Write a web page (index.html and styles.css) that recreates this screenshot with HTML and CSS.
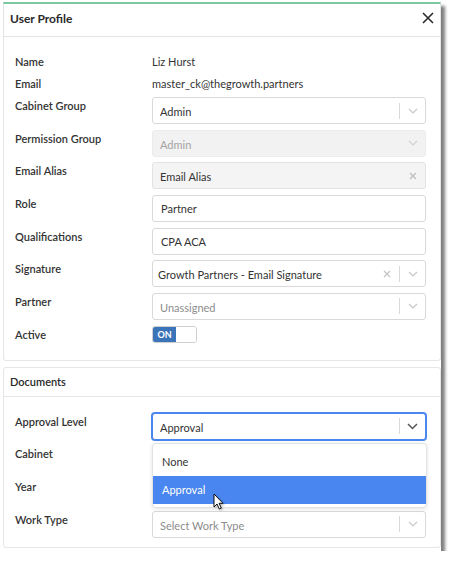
FILE: index.html
```html
<!DOCTYPE html>
<html lang="en">
<head>
<meta charset="utf-8">
<title>User Profile</title>
<link rel="stylesheet" href="styles.css">
</head>
<body>
<div class="dialog">
  <header class="dlg-head">
    <h1 class="dlg-title">User Profile</h1>
    <button class="close" type="button" aria-label="Close">
      <svg width="12" height="12" viewBox="0 0 12 12"><path d="M1 1 L11 11 M11 1 L1 11" stroke="#2b2b2b" stroke-width="1.6" fill="none"/></svg>
    </button>
  </header>

  <section class="card card-profile">
    <div class="form">
      <div class="row info"><span class="lbl">Name</span><span class="val">Liz Hurst</span></div>
      <div class="row info"><span class="lbl">Email</span><span class="val">master_ck@thegrowth.partners</span></div>

      <div class="row field first">
        <label class="lbl">Cabinet Group</label>
        <div class="select">
          <span class="sel-value">Admin</span>
          <span class="sep"></span>
          <span class="ind"><svg width="10" height="6" viewBox="0 0 10 6"><path d="M1 1 L5 5 L9 1" stroke="#c8c8c8" stroke-width="1.2" fill="none"/></svg></span>
        </div>
      </div>

      <div class="row field">
        <label class="lbl">Permission Group</label>
        <div class="select disabled">
          <span class="sel-value">Admin</span>
          <span class="ind"><svg width="10" height="6" viewBox="0 0 10 6"><path d="M1 1 L5 5 L9 1" stroke="#d2d2d2" stroke-width="1.2" fill="none"/></svg></span>
        </div>
      </div>

      <div class="row field">
        <label class="lbl">Email Alias</label>
        <div class="select muted">
          <span class="sel-value">Email Alias</span>
          <span class="ind"><svg width="8" height="8" viewBox="0 0 8 8"><path d="M1 1 L7 7 M7 1 L1 7" stroke="#bdbdbd" stroke-width="1.3" fill="none"/></svg></span>
        </div>
      </div>

      <div class="row field">
        <label class="lbl">Role</label>
        <input class="text-input" type="text" value="Partner">
      </div>

      <div class="row field">
        <label class="lbl">Qualifications</label>
        <input class="text-input" type="text" value="CPA ACA">
      </div>

      <div class="row field">
        <label class="lbl">Signature</label>
        <div class="select">
          <span class="sel-value tight">Growth Partners - Email Signature</span>
          <span class="ind"><svg width="8" height="8" viewBox="0 0 8 8"><path d="M1 1 L7 7 M7 1 L1 7" stroke="#c4c4c4" stroke-width="1.3" fill="none"/></svg></span>
          <span class="sep"></span>
          <span class="ind"><svg width="10" height="6" viewBox="0 0 10 6"><path d="M1 1 L5 5 L9 1" stroke="#c8c8c8" stroke-width="1.2" fill="none"/></svg></span>
        </div>
      </div>

      <div class="row field">
        <label class="lbl">Partner</label>
        <div class="select">
          <span class="sel-value placeholder">Unassigned</span>
          <span class="sep"></span>
          <span class="ind"><svg width="10" height="6" viewBox="0 0 10 6"><path d="M1 1 L5 5 L9 1" stroke="#c8c8c8" stroke-width="1.2" fill="none"/></svg></span>
        </div>
      </div>

      <div class="row field toggle-row">
        <label class="lbl">Active</label>
        <div class="toggle"><span class="toggle-on">ON</span><span class="toggle-off"></span></div>
      </div>
    </div>
  </section>

  <section class="card card-docs">
    <div class="card-head">Documents</div>
    <div class="form docs">
      <div class="row field">
        <label class="lbl">Approval Level</label>
        <div class="select focused">
          <span class="sel-value">Approval</span>
          <span class="sep"></span>
          <span class="ind"><svg width="11" height="7" viewBox="0 0 11 7"><path d="M1 1 L5.5 5.5 L10 1" stroke="#555" stroke-width="1.5" fill="none"/></svg></span>
          <ul class="menu">
            <li class="opt">None</li>
            <li class="opt active">Approval</li>
          </ul>
        </div>
      </div>

      <div class="row field">
        <label class="lbl">Cabinet</label>
        <div class="select">
          <span class="sel-value"></span>
          <span class="sep"></span>
          <span class="ind"></span>
        </div>
      </div>

      <div class="row field">
        <label class="lbl">Year</label>
        <div class="select">
          <span class="sel-value"></span>
          <span class="sep"></span>
          <span class="ind"></span>
        </div>
      </div>

      <div class="row field">
        <label class="lbl">Work Type</label>
        <div class="select">
          <span class="sel-value placeholder">Select Work Type</span>
          <span class="sep"></span>
          <span class="ind"><svg width="10" height="6" viewBox="0 0 10 6"><path d="M1 1 L5 5 L9 1" stroke="#c8c8c8" stroke-width="1.2" fill="none"/></svg></span>
        </div>
      </div>
    </div>
  </section>

  <svg class="pointer" width="12" height="18" viewBox="0 0 12 18">
    <path d="M1 1 L1 14 L4 11 L6.3 16 L8.3 15.1 L6.1 10.3 L10 10.3 Z" fill="#fff" stroke="#111" stroke-width="1" stroke-linejoin="round"/>
  </svg>
</div>
</body>
</html>
```

FILE: styles.css
```css
* {
  box-sizing: border-box;
}

body {
  margin: 0;
  background: #fff;
  font-family: "Lato", "Segoe UI", sans-serif;
  font-size: 11px;
  color: #333;
}

.dialog {
  position: relative;
  width: 438px;
  margin: 2px 0 0 3px;
  padding-bottom: 3px;
  background: #fff;
  box-shadow: 4px 4px 3px rgba(0, 0, 0, 0.5);
}

/* header */
.dlg-head {
  height: 35px;
  display: flex;
  align-items: center;
  justify-content: space-between;
  padding: 0 6px 4px 6px;
  border: 1px solid #e4e4e4;
  border-top: 2px solid #7cc8a0;
}

.dlg-title {
  margin: 0;
  font-size: 12px;
  font-weight: 700;
  color: #2a2a2a;
}

.close {
  display: flex;
  padding: 0;
  margin: 0;
  border: 0;
  background: none;
}

/* cards */
.card {
  border: 1px solid #e6e6e6;
  border-radius: 3px;
}

.card-profile {
  border-top: 0;
  border-radius: 0 0 3px 3px;
  padding: 14px 14px 17px 11px;
}

.card-docs {
  margin-top: 6px;
}

.card-head {
  height: 29px;
  display: flex;
  align-items: center;
  padding-left: 6px;
  border-bottom: 1px solid #e6e6e6;
  font-size: 11px;
  font-weight: 600;
  color: #2a2a2a;
}

.docs {
  padding: 16px 14px 9px 11px;
}

/* form rows */
.form {
  display: flex;
  flex-direction: column;
}

.row {
  display: grid;
  grid-template-columns: 137px 274px;
}

.row.info {
  height: 22px;
  line-height: 22px;
}

.row.field {
  height: 27px;
  margin-top: 5.67px;
}

.row.field.first {
  margin-top: 2px;
}

.docs .row.field:first-child {
  margin-top: 0;
}

.row.toggle-row {
  height: 17px;
}

.lbl {
  font-weight: 600;
  color: #333;
  line-height: 18px;
}

.row.info .lbl {
  line-height: 22px;
}

.val {
  color: #333;
}

/* select control */
.select {
  position: relative;
  display: flex;
  align-items: center;
  height: 27px;
  border: 1px solid #d9d9d9;
  border-radius: 3px;
  background: #fff;
}

.sel-value {
  flex: 1;
  padding: 2px 0 0 7px;
  white-space: nowrap;
  overflow: hidden;
  color: #333;
}

.sel-value.tight {
  padding-left: 5px;
}

.sel-value.placeholder {
  color: #8c8c8c;
}

.sep {
  width: 1px;
  height: 16px;
  background: #d9d9d9;
}

.ind {
  width: 25px;
  height: 100%;
  display: flex;
  align-items: center;
  justify-content: center;
}

.select.disabled {
  background: #f2f2f2;
  border-color: #ececec;
}

.select.disabled .sel-value {
  color: #a3a3a3;
}

.select.muted {
  background: #f4f4f4;
  border-color: #e3e3e3;
}

.select.focused {
  border-color: #4a86f0;
  box-shadow: 0 0 0 1px #4a86f0;
}

/* text input */
.text-input {
  height: 27px;
  width: 274px;
  margin: 0;
  padding: 0 0 0 8px;
  border: 1px solid #d9d9d9;
  border-radius: 3px;
  font: inherit;
  color: #333;
  outline: none;
}

/* toggle switch */
.toggle {
  display: flex;
  width: 45px;
  height: 17px;
  border: 1px solid #cfcfcf;
  border-radius: 3px;
  overflow: hidden;
}

.toggle-on {
  width: 23px;
  background: #3b74b8;
  color: #fff;
  font-size: 9px;
  font-weight: 700;
  line-height: 15px;
  text-align: center;
}

.toggle-off {
  flex: 1;
  background: #fff;
}

/* dropdown menu */
.menu {
  position: absolute;
  top: calc(100% + 4px);
  left: -1px;
  right: -2px;
  margin: 0;
  padding: 4px 0 3px;
  list-style: none;
  background: #fff;
  border: 1px solid #e2e2e2;
  border-radius: 4px;
  box-shadow: 0 1px 4px rgba(0, 0, 0, 0.12);
  z-index: 2;
}

.opt {
  height: 28px;
  line-height: 28px;
  padding-left: 9px;
  color: #333;
}

.opt.active {
  background: #4a86f0;
  color: #fff;
}

.pointer {
  position: absolute;
  left: 210px;
  top: 491px;
  z-index: 3;
  filter: drop-shadow(1px 1px 1px rgba(0, 0, 0, 0.3));
}
```
